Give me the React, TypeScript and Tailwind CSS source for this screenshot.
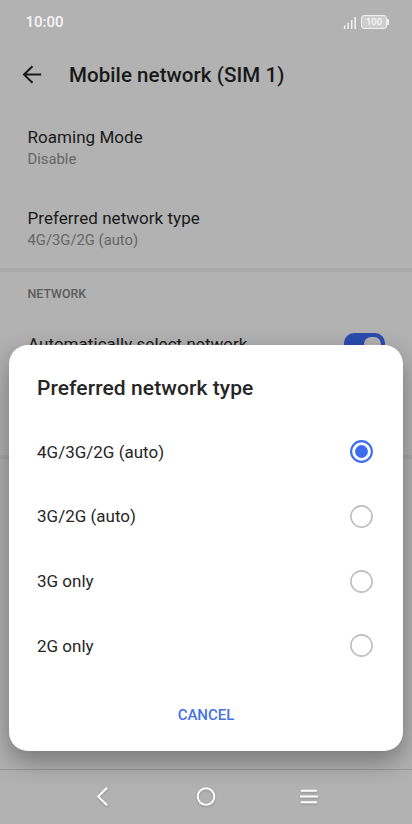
import { useState } from "react";

const networkTypes = ["4G/3G/2G (auto)", "3G/2G (auto)", "3G only", "2G only"];

export default function App() {
  const [selected, setSelected] = useState(networkTypes[0]);

  return (
    <div className="relative flex h-[824px] w-[412px] flex-col overflow-hidden bg-[#b2b2b2] font-['Roboto',sans-serif] text-[#191919]">
      <StatusBar />

      {/* Settings page, dimmed by the dialog */}
      <header className="flex h-[63px] items-center pt-px pl-[22px]">
        <BackArrow />
        <h1 className="ml-[25px] text-[20.5px] leading-6 font-medium tracking-[0.07px]">
          Mobile network (SIM 1)
        </h1>
      </header>
      <main className="flex flex-1 flex-col">
        <SettingRow title="Roaming Mode" value="Disable" />
        <SettingRow title="Preferred network type" value="4G/3G/2G (auto)" />
        <div className="h-1 shrink-0 bg-[#a9a9a9]" />
        <h2 className="mt-[14px] px-[27.5px] text-[12.4px] leading-4 font-medium text-[#5c5c5c]">
          NETWORK
        </h2>
        <div className="mt-[31px] flex items-start justify-between pr-[27px] pl-[28px]">
          <span className="text-[17px] leading-[22px] tracking-[0.04px]">
            Automatically select network
          </span>
          <span className="flex h-6 w-[41px] justify-end rounded-[10px] bg-[#2a4cb0] p-1">
            <span className="h-4 w-[17px] rounded-[7px] bg-[#b2b2b2]" />
          </span>
        </div>
        <div className="mt-[98px] h-1 shrink-0 bg-[#a9a9a9]" />
      </main>

      <NavigationBar />

      {/* Dialog */}
      <section
        role="dialog"
        className="absolute top-[344.5px] left-[9px] flex h-[406.5px] w-[394px] flex-col rounded-[19px] bg-white px-7 text-[#262626] shadow-[0_10px_26px_rgba(0,0,0,0.35)]"
      >
        <h2 className="mt-[31px] text-[21px] leading-6 font-medium tracking-[0.08px]">
          Preferred network type
        </h2>
        <div className="mt-[20px] flex flex-col">
          {networkTypes.map((type) => (
            <button
              key={type}
              type="button"
              onClick={() => setSelected(type)}
              className="flex h-[64.7px] items-center justify-between pr-[2px] text-left text-[17px]"
            >
              <span className="pt-px">{type}</span>
              <Radio checked={type === selected} />
            </button>
          ))}
        </div>
        <button
          type="button"
          className="mt-[27px] self-center text-[15px] leading-5 font-medium text-[#4672e3]"
        >
          CANCEL
        </button>
      </section>
    </div>
  );
}

function StatusBar() {
  return (
    <div className="flex h-[43px] shrink-0 items-center justify-between pr-[23px] pl-[25.5px] text-[#f5f5f5]">
      <span className="pt-px text-[15px] leading-5 font-medium">10:00</span>
      <div className="flex items-center">
        <svg width="14" height="14" viewBox="0 0 14 14" className="mt-[2px]">
          <path
            d="M1.6 9.5V13M5.1 6.8V13M8.7 4V13M12.2 1V13"
            stroke="currentColor"
            strokeWidth="1.5"
          />
        </svg>
        <span className="ml-[4px] flex h-[14px] w-[26px] items-center justify-center rounded-[3px] border border-[#f0f0f0] bg-[#cecece] text-[9.5px] leading-none font-medium">
          100
        </span>
        <span className="h-[6px] w-[2px] rounded-r-[1px] bg-[#f0f0f0]" />
      </div>
    </div>
  );
}

function BackArrow() {
  return (
    <svg width="22" height="22" viewBox="0 0 22 22" fill="none">
      <path
        d="M10.5 2.2L2 10.6l8.5 8.2M2 10.6H19.2"
        stroke="currentColor"
        strokeWidth="2"
      />
    </svg>
  );
}

function SettingRow({ title, value }: { title: string; value: string }) {
  return (
    <div className="flex h-[81px] shrink-0 flex-col px-[27.5px] pt-5">
      <span className="text-[17px] leading-[22px] tracking-[0.04px]">
        {title}
      </span>
      <span className="text-[14.8px] leading-[22px] text-[#666]">{value}</span>
    </div>
  );
}

function Radio({ checked }: { checked: boolean }) {
  return (
    <svg width="23" height="23" viewBox="0 0 23 23" fill="none">
      {checked ? (
        <>
          <circle cx="11.5" cy="11.5" r="10.4" stroke="#3d6cf0" strokeWidth="2.1" />
          <circle cx="11.5" cy="11.5" r="6.4" fill="#3d6cf0" />
        </>
      ) : (
        <circle cx="11.5" cy="11.5" r="10.6" stroke="#bebebe" strokeWidth="1.6" />
      )}
    </svg>
  );
}

function NavigationBar() {
  return (
    <nav className="flex h-[55px] shrink-0 items-center justify-between border-t border-[#999] px-[92px] text-white">
      <svg
        width="22"
        height="22"
        viewBox="0 0 22 22"
        fill="none"
        className="drop-shadow-[0_1px_1px_rgba(0,0,0,0.2)]"
      >
        <path d="M15 1.8L6.2 10.6l8.8 8.7" stroke="currentColor" strokeWidth="2" />
      </svg>
      <svg
        width="22"
        height="22"
        viewBox="0 0 22 22"
        fill="none"
        className="drop-shadow-[0_1px_1px_rgba(0,0,0,0.2)]"
      >
        <circle cx="11" cy="10.6" r="8.3" stroke="currentColor" strokeWidth="1.9" />
      </svg>
      <svg
        width="22"
        height="22"
        viewBox="0 0 22 22"
        fill="none"
        className="drop-shadow-[0_1px_1px_rgba(0,0,0,0.2)]"
      >
        <path
          d="M3.6 4.8H18.2M2.8 10.6H19.2M3.6 16.3H18.2"
          stroke="currentColor"
          strokeWidth="2"
          strokeLinecap="round"
        />
      </svg>
    </nav>
  );
}
